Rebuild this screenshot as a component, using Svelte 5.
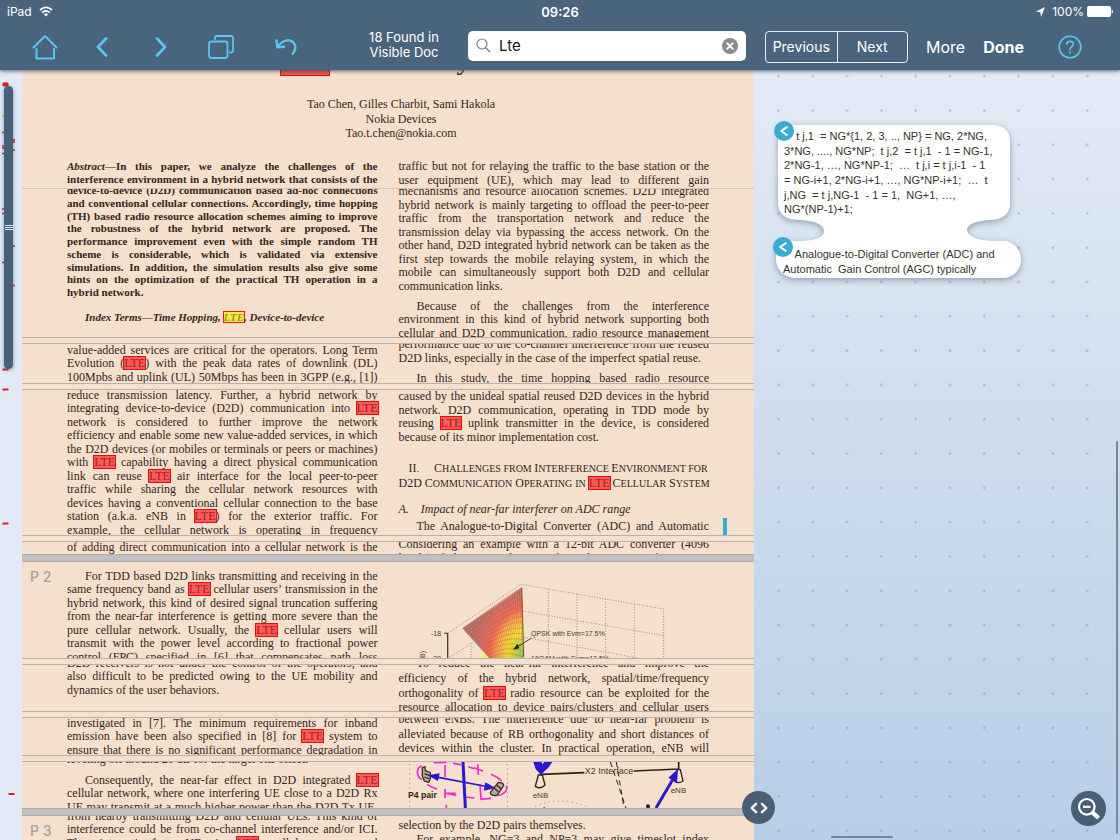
<script>
  // Each strip is a cropped slice of the paper. Blocks hold pre-broken lines,
  // `gap` is the space above the block and `h` the height its lines share.
  const strips = [
    {
      h: 118, end: 'line', front: true,
      left: [{ gap: 19, h: 25, kind: 'abstract', lines: ['In this paper, we analyze the challenges of the', 'interference environment in a hybrid network that consists of the'], lead: 'Abstract—' }],
      right: [{ gap: 19, h: 27, lines: ['traffic but not for relaying the traffic to the base station or the', 'user equipment (UE), which may lead to different gain'] }]
    },
    {
      h: 148, end: 'gap',
      left: [
        { gap: -5, h: 115, kind: 'abstract', ragged: true, lines: ['device-to-device (D2D) communication based ad-hoc connections', 'and conventional cellular connections. Accordingly, time hopping', '(TH) based radio resource allocation schemes aiming to improve', 'the robustness of the hybrid network are proposed. The', 'performance improvement even with the simple random TH', 'scheme is considerable, which is validated via extensive', 'simulations. In addition, the simulation results also give some', 'hints on the optimization of the practical TH operation in a', 'hybrid network.'] },
        { gap: 12, h: 13, kind: 'index', indent: true, ragged: true, lines: ['Index Terms—Time Hopping, LTE, Device-to-device'] }
      ],
      right: [
        { gap: -4, h: 108, ragged: true, lines: ['mechanisms and resource allocation schemes. D2D integrated', 'hybrid network is mainly targeting to offload the peer-to-peer', 'traffic from the transportation network and reduce the', 'transmission delay via bypassing the access network. On the', 'other hand, D2D integrated hybrid network can be taken as the', 'first step towards the mobile relaying system, in which the', 'mobile can simultaneously support both D2D and cellular', 'communication links.'] },
        { gap: 7, h: 40, indent: true, lines: ['Because of the challenges from the interference', 'environment in this kind of hybrid network supporting both', 'cellular and D2D communication, radio resource management'] }
      ]
    },
    {
      h: 39, end: 'gap',
      left: [{ gap: 0, h: 40, lines: ['value-added services are critical for the operators. Long Term', 'Evolution (LTE) with the peak data rates of downlink (DL)', '100Mpbs and uplink (UL) 50Mbps has been in 3GPP (e.g., [1])'] }],
      right: [
        { gap: -6, h: 27, ragged: true, lines: ['performance due to the co-channel interference from the reused', 'D2D links, especially in the case of the imperfect spatial reuse.'] },
        { gap: 7, h: 13, indent: true, lines: ['In this study, the time hopping based radio resource'] }
      ]
    },
    {
      h: 145, end: 'gap', anchor: true,
      left: [{ gap: -1, h: 148, lines: ['reduce transmission latency. Further, a hybrid network by', 'integrating device-to-device (D2D) communication into LTE', 'network is considered to further improve the network', 'efficiency and enable some new value-added services, in which', 'the D2D devices (or mobiles or terminals or peers or machines)', 'with LTE capability having a direct physical communication', 'link can reuse LTE air interface for the local peer-to-peer', 'traffic while sharing the cellular network resources with', 'devices having a conventional cellular connection to the base', 'station (a.k.a. eNB in LTE) for the exterior traffic. For', 'example, the cellular network is operating in frequency'] }],
      right: [
        { gap: 0, h: 54, ragged: true, lines: ['caused by the unideal spatial reused D2D devices in the hybrid', 'network. D2D communication, operating in TDD mode by', 'reusing LTE uplink transmitter in the device, is considered', 'because of its minor implementation cost.'] },
        { gap: 18, h: 29, tag: 'h2', kind: 'section', lines: ['II.\u2003\u2002Challenges from Interference Environment for', 'D2D Communication Operating in LTE Cellular System'] },
        { gap: 12, h: 14, tag: 'h3', kind: 'sub', ragged: true, lines: ['A.\u2003Impact of near-far interferer on ADC range'] },
        { gap: 3, h: 13, indent: true, lines: ['The Analogue-to-Digital Converter (ADC) and Automatic'] }
      ]
    },
    {
      h: 12, end: 'page',
      left: [{ gap: -1, h: 13, lines: ['of adding direct communication into a cellular network is the'] }],
      right: [{ gap: -4, h: 27, lines: ['Considering an example with a 12-bit ADC converter (4096', 'levels) if the received power from the near interferer is 27'] }]
    },
    {
      h: 96, end: 'gap', label: 'P 2', figure: 'surface',
      left: [{ gap: 8, h: 94, indent: true, lines: ['For TDD based D2D links transmitting and receiving in the', 'same frequency band as LTE cellular users’ transmission in the', 'hybrid network, this kind of desired signal truncation suffering', 'from the near-far interference is getting more severe than the', 'pure cellular network. Usually, the LTE cellular users will', 'transmit with the power level according to fractional power', 'control (FPC) specified in [6] that compensates path loss'] }]
    },
    {
      h: 46, end: 'gap',
      left: [{ gap: -8, h: 40, ragged: true, lines: ['D2D receivers is not under the control of the operators, and', 'also difficult to be predicted owing to the UE mobility and', 'dynamics of the user behaviors.'] }],
      right: [{ gap: -8, h: 59, indent: true, lines: ['To reduce the near-far interference and improve the', 'efficiency of the hybrid network, spatial/time/frequency', 'orthogonality of LTE radio resource can be exploited for the', 'resource allocation to device pairs/clusters and cellular users'] }]
    },
    {
      h: 37, end: 'gap',
      left: [{ gap: -1, h: 40, lines: ['investigated in [7]. The minimum requirements for inband', 'emission have been also specified in [8] for LTE system to', 'ensure that there is no significant performance degradation in'] }],
      right: [{ gap: -5, h: 44, lines: ['between eNBs.  The interference due to near-far problem is', 'alleviated because of RB orthogonality and short distances of', 'devices within the cluster. In practical operation, eNB will'] }]
    },
    {
      h: 46, end: 'page', figure: 'network',
      left: [
        { gap: -9, h: 13, ragged: true, lines: ['leveling off around 20 dB for the larger RB offset.'] },
        { gap: 8, h: 40, indent: true, lines: ['Consequently, the near-far effect in D2D integrated LTE', 'cellular network, where one interfering UE close to a D2D Rx', 'UE may transmit at a much higher power than the D2D Tx UE.'] }
      ]
    },
    {
      h: 24, label: 'P 3',
      left: [{ gap: -6, h: 40, lines: ['from nearby transmitting D2D and cellular UEs. This kind of', 'interference could be from co-channel interference and/or ICI.', 'The interesting/hop UE is LTE cellular users and'] }],
      right: [
        { gap: 3, h: 14, ragged: true, lines: ['selection by the D2D pairs themselves.'] },
        { gap: 0, h: 14, indent: true, lines: ['For example, NG=3 and NP=3 may give timeslot index'] }
      ]
    }
  ];

  const parts = (text) => text.split(/(LTE)/).filter(Boolean);
  const caps = (text) => text.split(/([A-Z0-9]+)/).filter(Boolean);
  const isCap = (text) => /^[A-Z0-9]/.test(text);
  const justified = (block, i) => !(block.ragged && i === block.lines.length - 1);

  const noteOne = [
    '    t j,1  = NG*{1, 2, 3, .., NP} = NG, 2*NG,',
    '3*NG, ...., NG*NP;  t j,2  = t j,1  - 1 = NG-1,',
    '2*NG-1, …, NG*NP-1;  …  t j,i = t j,i-1  - 1',
    '= NG-i+1, 2*NG-i+1, …, NG*NP-i+1;  …  t',
    'j,NG  = t j,NG-1  - 1 = 1,  NG+1, …,',
    'NG*(NP-1)+1;'
  ];
  const noteTwo = ['    Analogue-to-Digital Converter (ADC) and', 'Automatic  Gain Control (AGC) typically'];

  // Mesh of the 3-D surface: rows run from the left edge to the right edge.
  const mix = (a, b, t) => [a[0] + (b[0] - a[0]) * t, a[1] + (b[1] - a[1]) * t];
  const fan = Array.from({ length: 26 }, (_, i) => {
    const t = i / 25;
    return { a: mix([245, 205], [422, 83], t), b: mix([325, 294], [429, 294], t) };
  });
  const arcs = Array.from({ length: 13 }, (_, i) => {
    const a = mix([245, 205], [325, 294], i / 12);
    const b = mix([422, 83], [428, 290], i / 12);
    return `M${a[0]} ${a[1]} Q${390 - i * 2} ${100 + i * 14} ${b[0]} ${b[1]}`;
  });

  let query = $state('Lte');
</script>

{#snippet line(text)}{#each parts(text) as part}{#if part === 'LTE'}<mark>LTE</mark>{:else}{part}{/if}{/each}{/snippet}

{#snippet column(blocks)}
  <div class="column">
    {#each blocks as block}
      <svelte:element this={block.tag ?? 'p'} class={['block', block.kind, block.indent && 'indent']} style:margin-top="{block.gap}px" style:height="{block.h}px">
        {#each block.lines as text, i}
          <span class={['line', justified(block, i) && 'full']}>{#if i === 0 && block.lead}<i>{block.lead}</i>{/if}{#if block.kind === 'section'}{#each parts(text) as part}{#if part === 'LTE'}<mark class="cap">LTE</mark>{:else}{#each caps(part) as c}{#if isCap(c)}<span class="cap">{c}</span>{:else}{c}{/if}{/each}{/if}{/each}{:else}{@render line(text)}{/if}</span>
        {/each}
      </svelte:element>
    {/each}
  </div>
{/snippet}

{#snippet surface()}
  <svg class="figure" viewBox="54 6 930 288" preserveAspectRatio="xMinYMin meet" role="img" aria-label="Surface plot">
    <defs>
      <radialGradient id="heat" gradientUnits="userSpaceOnUse" cx="438" cy="285" r="215" gradientTransform="translate(438 285) scale(.8 1) translate(-438 -285)">
        <stop offset="0" stop-color="#3fe08a" />
        <stop offset=".14" stop-color="#a8ee4a" />
        <stop offset=".34" stop-color="#fdf03a" />
        <stop offset=".52" stop-color="#fbb45a" />
        <stop offset=".66" stop-color="#f4705a" />
        <stop offset=".8" stop-color="#d2776c" />
        <stop offset="1" stop-color="#b5766c" />
      </radialGradient>
    </defs>
    <g fill="none" stroke="#a08c7c" stroke-width="3" stroke-dasharray="3 5">
      <path d="M200 220 420 73 848 147V294M270 250V294M502 88V294M588 102V294M674 117V294M760 132V294M425 153 848 227M430 232 770 294M205 292 275 248" />
    </g>
    <path d="M285 294 308 276 330 280 340 294Z" fill="#eef08a" />
    <path d="M245 205 422 83 429 294H325Z" fill="url(#heat)" />
    <g fill="none" stroke="#7d3a30" stroke-width="1.2" opacity=".6">
      {#each fan as f}<line x1={f.a[0]} y1={f.a[1]} x2={f.b[0]} y2={f.b[1]} />{/each}
    </g>
    <g fill="none" stroke="#e8402e" stroke-width="2" opacity=".55">
      {#each arcs as d}<path {d} />{/each}
    </g>
    <path d="M422 83 428 290" stroke="#8a4a30" stroke-width="3" />
    <path d="M200 294V220M190 220H200" stroke="#4a3c30" stroke-width="4" fill="none" />
    <path d="M452 234 410 260" stroke="#4a3c20" stroke-width="3" />
    <path d="M396 269 409 252 416 265Z" fill="#2a2010" />
    <g font-size="21" fill="#4a3c30">
      <text x="150" y="227">-18</text>
      <text x="150" y="303">-20</text>
      <text x="450" y="227">QPSK with Evm=17.5%</text>
      <text x="450" y="303">16QAM with Evm=12.5%</text>
      <text transform="translate(131 294) rotate(-90)">B)</text>
    </g>
  </svg>
{/snippet}

{#snippet network()}
  <svg class="figure" viewBox="54 219 930 138" preserveAspectRatio="xMinYMin meet" role="img" aria-label="Device pairs and base stations">
    <path d="M86 225V357M379 225V357" stroke="#8c7c70" stroke-width="3" stroke-dasharray="3 11" />
    <path d="M463 352Q540 318 624 356" fill="none" stroke="#8c7c70" stroke-width="3" stroke-dasharray="3 11" />
    <g fill="none" stroke="#f02ad0" stroke-width="5">
      <path d="M122 230C104 238 106 260 122 272M138 286Q152 295 168 300M158 221 196 220M216 223 240 227M262 233 280 239M330 256Q350 264 362 276M376 290C382 306 366 318 350 320M330 328 298 331M280 327 250 324M226 319 200 313" />
      <path d="M192 228V264M192 300V328M192 313H224M290 226 292 258M278 236 306 246M297 286 300 331M196 347V357M490 353V357" />
    </g>
    <g fill="#b9aa9c" stroke="#3a2c20" stroke-width="4">
      <path d="M124 236 132 233 133 245 148 251Q150 276 142 280L130 276 124 262Z" />
      <path d="M352 280Q368 280 368 290L348 319Q330 322 328 310Z" />
      <path d="M338 296 352 308M346 288 360 299M130 254 146 260M130 264 146 270" fill="none" />
    </g>
    <path d="M246 219 253 357" stroke="#2a18d0" stroke-width="9" />
    <path d="M160 263 325 294" stroke="#2a18d0" stroke-width="5" />
    <path d="M139 259 176 253 171 276Z M344 297 308 305 313 280Z" fill="#2a18d0" />
    <g stroke="#2e2216" stroke-width="5" fill="none">
      <path d="M480 256 610 251M758 246 893 240M893 219V240" />
      <path d="M472 258H484L492 288Q478 302 463 292ZM888 242H898L906 276Q892 286 880 276Z" stroke-width="4" />
      <path d="M688 219 735 357M706 219 728 350" stroke-width="3" stroke-dasharray="16 12" />
    </g>
    <path d="M457 219H482L484 226 490 219H514L502 236 479 257 464 240Z" fill="#2a18d0" />
    <path d="M825 357 882 260" stroke="#2a18d0" stroke-width="9" />
    <path d="M891 240 888 282 862 266Z" fill="#2a18d0" />
    <circle cx="801" cy="352" r="6" fill="#2e2216" />
    <g fill="#4a3c30" font-size="24">
      <text x="81" y="327" font-size="26" font-weight="bold" fill="#2e2216">P4 pair</text>
      <text x="611" y="256" font-size="27">X2 Interface</text>
      <text x="455" y="326">eNB</text>
      <text x="869" y="311">eNB</text>
    </g>
  </svg>
{/snippet}

<div class="app">
  <header>
    <div class="status">
      <span class="carrier">iPad
        <svg width="14" height="11" viewBox="0 0 14 11" fill="none" stroke="#fff" stroke-width="1.8" aria-hidden="true"><path d="M1 4Q7-1.200 13 4M3.200 6.500Q7 3.200 10.800 6.500" /><path d="M4.800 8.200Q7 6.400 9.200 8.200L7 10.600Z" fill="#fff" stroke="none" /></svg>
      </span>
      <time>09:26</time>
      <span class="power">
        <svg width="9" height="10" viewBox="0 0 9 10" aria-hidden="true"><path d="M9 0 5 10 4.400 5.200 0 4.600Z" fill="#fff" /></svg>
        <span>100%</span>
        <svg width="26" height="11" viewBox="0 0 26 11" aria-hidden="true"><rect x="0" y="0" width="24" height="11" rx="2" fill="#fff" /><path d="M24.600 3.500Q26 4 26 5.500T24.600 7.500Z" fill="#fff" /></svg>
      </span>
    </div>
    <div class="toolbar">
      <nav aria-label="Document">
        <button aria-label="Home"><svg width="26" height="26" viewBox="0 0 26 26"><path d="M1.500 13.500 13 2 24.500 13.500M4.500 15V24.500H22V15" /></svg></button>
        <button aria-label="Back"><svg width="12" height="20" viewBox="0 0 12 20"><path d="M10 1.500 2 10 10 18.500" stroke-width="2.600" /></svg></button>
        <button aria-label="Forward"><svg width="12" height="20" viewBox="0 0 12 20"><path d="M2 1.500 10 10 2 18.500" stroke-width="2.600" /></svg></button>
        <button aria-label="Pages"><svg width="26" height="24" viewBox="0 0 26 24"><rect x="1" y="6.500" width="18.500" height="16.500" rx="2.500" stroke-width="1.800" /><path d="M7 4V3Q7 1 9 1H23Q25 1 25 3V15.500Q25 17.500 23 17.500H22" stroke-width="1.800" /></svg></button>
        <button aria-label="Undo"><svg width="22" height="18" viewBox="0 0 22 18"><path d="M2.500 9C7 2 15 .5 18.500 4.500C21.500 8 20.500 13 17.500 16M1.500 2.500 2.300 9.300 9 8.800" stroke-width="2.400" /></svg></button>
      </nav>
      <p class="found">18 Found in<br />Visible Doc</p>
      <label class="search">
        <svg width="15" height="15" viewBox="0 0 15 15" fill="none" stroke="#85858a" stroke-width="1.200" aria-hidden="true"><circle cx="6" cy="6" r="5" /><path d="M9.700 9.700 14 14" stroke-width="1.600" /></svg>
        <input type="text" aria-label="Search" bind:value={query} />
        <button aria-label="Clear search" onclick={() => (query = '')}><svg width="16" height="16" viewBox="0 0 16 16"><circle cx="8" cy="8" r="8" fill="#8a8a91" stroke="none" /><path d="M5.200 5.200 10.800 10.800M10.800 5.200 5.200 10.800" stroke="#fff" stroke-width="1.800" /></svg></button>
      </label>
      <div class="segments"><button>Previous</button><button>Next</button></div>
      <button class="more">More</button>
      <button class="done">Done</button>
      <button class="help" aria-label="Help"><svg width="24" height="24" viewBox="0 0 24 24"><circle cx="12" cy="12" r="10.800" stroke-width="1.600" /><path d="M8.700 9.500C8.700 5.200 15.300 5.400 15.300 9.300C15.300 11.800 12 11.700 12 14.600" stroke-width="1.600" /><circle cx="12" cy="17.500" r="1.100" fill="#58c6ee" stroke="none" /></svg></button>
    </div>
  </header>

  <main>
    <aside class="rail" aria-label="Hit overview">
      <svg width="22" height="770" viewBox="0 70 22 770" aria-hidden="true">
        <ellipse cx="5.500" cy="84.500" rx="3.200" ry="2.200" fill="#f0141c" />
        <path d="M2 116H4" stroke="#e8e020" stroke-width="2" />
        <g stroke="#f0141c" stroke-width="2"><path d="M2 132.500H4M2 153.500H4M2 209H4M2 213.500H4M2 262.500H4M13 246H15M13 285.500H15M13 150H15M3 145V149M14 139V143" stroke-width="1.600" /><path d="M2.500 369.500H8.500M2.500 389.500H8.500M2.500 523.500H8.500M8.500 794H14.500" /></g>
      </svg>
      <div class="thumb"><i></i><i></i><i></i></div>
    </aside>

    <article>
      {#each strips as strip}
        <section class={['strip', strip.end]} style:height="{strip.h}px">
          {#if strip.front}
            <h1><mark>LTE</mark><span>y</span></h1>
            <p class="authors"><span>Tao Chen, Gilles Charbit, Sami Hakola</span><span>Nokia Devices</span><span>Tao.t.chen@nokia.com</span></p>
          {/if}
          <div class="columns">
            <span class="label">{strip.label ?? ''}</span>
            {@render column(strip.left)}
            {#if strip.figure === 'surface'}{@render surface()}{:else if strip.figure === 'network'}{@render network()}{:else}{@render column(strip.right)}{/if}
          </div>
          {#if strip.anchor}<span class="anchor"></span>{/if}
        </section>
        {#if strip.end}<div class="cut {strip.end}"></div>{/if}
      {/each}
    </article>

    <section class="canvas" aria-label="Notes">
      <svg class="dots" width="100%" height="100%" aria-hidden="true">
        <defs><pattern id="dot" x="7.300" y="-11" width="34.300" height="34.300" patternUnits="userSpaceOnUse"><circle cx="17.200" cy="17.200" r="1.300" fill="#7f92aa" opacity=".5" /></pattern></defs>
        <rect width="100%" height="100%" fill="url(#dot)" />
      </svg>
      <div class="notes">
        <svg class="blob" width="260" height="170" viewBox="770 115 260 170" aria-hidden="true">
          <path d="M784 125H992C1004 125 1010 131 1010 141V204C1010 214 1002 220 990 220C974 221 967 225 967 230C968 237 979 241 996 241H1003C1013 241 1021 249 1021 259.500S1013 278 1003 278H796C785 278 776 270 776 259V241H798C816 241 824 237 824 231C824 225 816 221 800 220C788 220 778 216 778 202V131Q778 125 784 125Z" fill="#fff" />
        </svg>
        <p class="note one">{#each noteOne as t}<span>{t}</span>{/each}</p>
        <p class="note two">{#each noteTwo as t}<span>{t}</span>{/each}</p>
        <button class="jump first" aria-label="Go to excerpt 1"><svg width="10" height="10" viewBox="0 0 10 10"><path d="M7.800 1.200 2.200 5 7.800 8.800" /></svg></button>
        <button class="jump second" aria-label="Go to excerpt 2"><svg width="10" height="10" viewBox="0 0 10 10"><path d="M7.800 1.200 2.200 5 7.800 8.800" /></svg></button>
      </div>
      <button class="round split" aria-label="Resize panes"><svg width="18" height="12" viewBox="0 0 18 12"><path d="M6 1.800 1.800 6 6 10.200M12 1.800 16.200 6 12 10.200" stroke="#fff" stroke-width="2.400" /></svg></button>
      <button class="round zoom" aria-label="Zoom out"><svg width="24" height="24" viewBox="0 0 24 24"><circle cx="9.800" cy="9.800" r="7.800" stroke="#fff" stroke-width="2.200" /><path d="M6 9.800H13.600" stroke="#fff" stroke-width="2.200" stroke-linecap="butt" /><path d="M15.600 15.600 21.500 21" stroke="#fff" stroke-width="4.400" stroke-linecap="butt" /></svg></button>
      <span class="bar vertical"></span>
      <span class="bar horizontal"></span>
    </section>
  </main>
</div>

<style>
  :global(body) { overflow: hidden; }
  .app { display: flex; flex-direction: column; height: 100vh; overflow: hidden; font-family: Inter, "Liberation Sans", sans-serif; }
  p, h1, h2, h3 { margin: 0; font-weight: normal; }
  button { margin: 0; padding: 0; border: 0; background: none; color: #fff; font: inherit; cursor: pointer; }
  button svg { display: block; margin: auto; fill: none; stroke: #58c6ee; stroke-width: 2; stroke-linecap: round; stroke-linejoin: round; }

  header { position: relative; z-index: 3; background: #4a647d; color: #fff; box-shadow: 0 1px 4px rgba(40, 50, 65, .75); }
  .status { display: grid; grid-template-columns: 1fr auto 1fr; align-items: center; height: 23px; padding: 0 7px; font-size: 12px; }
  .carrier, .power { display: flex; align-items: center; gap: 7px; }
  .power { justify-content: flex-end; gap: 3px; }
  .power svg:first-child { margin-right: 4px; }
  time { font-size: 13px; font-weight: 600; }
  .toolbar { display: flex; align-items: center; height: 47px; padding: 0 38px 0 16px; }
  .toolbar > * { flex-shrink: 0; }
  nav { display: grid; grid-template-columns: 57px 58px 60px 60px 70px; height: 47px; align-items: center; }
  .found { width: 80px; margin: 0 24px 3px 43px; font-size: 13px; line-height: 15px; text-align: center; white-space: nowrap; }
  .toolbar .search { display: flex; flex: 1; align-items: center; gap: 8px; min-width: 0; height: 30px; margin-bottom: 2px; padding: 0 8px; border-radius: 5px; background: #fff; box-sizing: border-box; }
  .search input { flex: 1; min-width: 0; padding: 0; border: 0; outline: 0; background: none; color: #111; font: 15px Inter, sans-serif; }
  .segments { display: grid; grid-template-columns: 1fr 1fr; width: 143px; height: 32px; margin: 0 18px 0 19px; box-sizing: border-box; border: 1px solid #e8edf2; border-radius: 4px; font-size: 14px; }
  .segments button + button { border-left: 1px solid #e8edf2; }
  .more { font-size: 16px; margin-right: 18px; }
  .done { font-size: 16px; font-weight: 700; margin-right: 34px; }

  main { display: grid; flex: 1; min-height: 0; grid-template-columns: 22px minmax(0, 2fr) minmax(0, 1fr); }
  .rail { position: relative; background: #e2eaf5; overflow: hidden; }
  .thumb { position: absolute; top: 16px; left: 4px; display: flex; flex-direction: column; align-items: center; justify-content: center; gap: 1px; width: 9px; height: 283px; border-radius: 5px; background: #47617b; box-shadow: 0 1px 4px rgba(70, 97, 123, .6); }
  .thumb i { width: 8px; height: 1px; background: #dce6ee; }

  article { overflow: hidden; background: #f4e0cd; color: #34261a; font-family: "Liberation Serif", serif; font-size: 12px; }
  .strip { position: relative; overflow: hidden; }
  .columns { display: grid; grid-template-columns: 45px minmax(0, 1fr) 21px minmax(0, 1fr); padding-right: 45px; }
  .columns > :nth-child(3) { grid-column: 4; }
  .columns:has(.figure) { height: 100%; grid-template-rows: 100%; }
  .label { padding: 6px 0 0 8px; color: #a6a19d; font: 500 14px/17px Inter, sans-serif; white-space: nowrap; }
  .cut { box-sizing: border-box; height: 7px; border: solid; border-width: 1px 0; border-color: #b9b1ab #d0c5bb; }
  .cut.line { height: 1px; border-width: 1px 0 0; border-color: #d3c5b8; }
  .cut.page { height: 8px; border-color: #adadad #c4c2c1; background: #bfbfbf; }
  .block { display: grid; grid-auto-rows: minmax(0, 1fr); font-size: 12px; line-height: 13px; }
  .line { display: block; white-space: nowrap; }
  .full { text-align-last: justify; }
  .indent .line:first-child { padding-left: 18px; }
  .abstract { font-size: 11px; font-weight: 700; line-height: 12px; }
  .index { font-size: 11px; font-weight: 700; font-style: italic; }
  .sub { font-style: italic; }
  .section { font-size: 10px; }
  .section .line { text-transform: uppercase; }
  .section .line:first-child { margin: 0 2px 0 10px; }
  .cap { font-size: 12px; }
  mark { margin: 0 -1px; padding: 0 1px; background: #fb5a56; color: #a31f1f; box-shadow: inset 0 0 0 1px #e80c12; }
  .index mark { background: #f6ea4a; color: #a8951c; box-shadow: inset 0 0 0 1px #f0141c; }

  h1 { display: flex; justify-content: center; gap: 126px; height: 6px; margin-top: -26px; padding: 0 26px 26px 0; font-size: 28px; line-height: 32px; }
  h1 mark { height: 32px; margin: 0; padding: 0 1px; background: #e45c50; }
  .authors { display: grid; grid-auto-rows: minmax(0, 1fr); height: 44px; margin-top: 21px; padding-left: 26px; line-height: 14px; text-align: center; }
  .anchor { position: absolute; right: 27px; bottom: 0; width: 4px; height: 17px; background: #3cabd2; }
  .figure { display: block; width: 100%; height: 100%; font-family: "Liberation Sans", sans-serif; overflow: hidden; }

  .canvas { position: relative; min-width: 0; background: linear-gradient(#e3ebf5, #d5e2f0 30%, #b8cee7); }
  .dots { position: absolute; inset: 0; }
  .notes { position: absolute; top: 45px; left: 16px; color: #36322a; font-family: "Liberation Sans", sans-serif; font-size: 11px; }
  .blob { display: block; filter: drop-shadow(0 2px 3px rgba(70, 85, 105, .5)); }
  .note { position: absolute; left: 14px; display: grid; grid-auto-rows: minmax(0, 1fr); line-height: 14px; white-space: pre; }
  .one { top: 14px; height: 88px; }
  .two { top: 132px; left: 13px; height: 29px; }
  .jump { position: absolute; left: 4px; top: 6px; width: 20px; height: 20px; border-radius: 50%; background: #3cabd2; }
  .jump svg { stroke: #fff; }
  .second { top: 122px; left: 3px; }
  .round { position: absolute; border-radius: 50%; background: #4a5f76; }
  .split { left: -12px; bottom: 16px; width: 33px; height: 33px; z-index: 2; }
  .zoom { right: 14px; bottom: 14px; width: 35px; height: 35px; }
  .bar { position: absolute; border-radius: 1px; background: #7a8795; }
  .vertical { right: 2px; bottom: 6px; width: 2px; height: 51%; }
  .horizontal { left: 21%; bottom: 2px; width: 62px; height: 2px; }
</style>
